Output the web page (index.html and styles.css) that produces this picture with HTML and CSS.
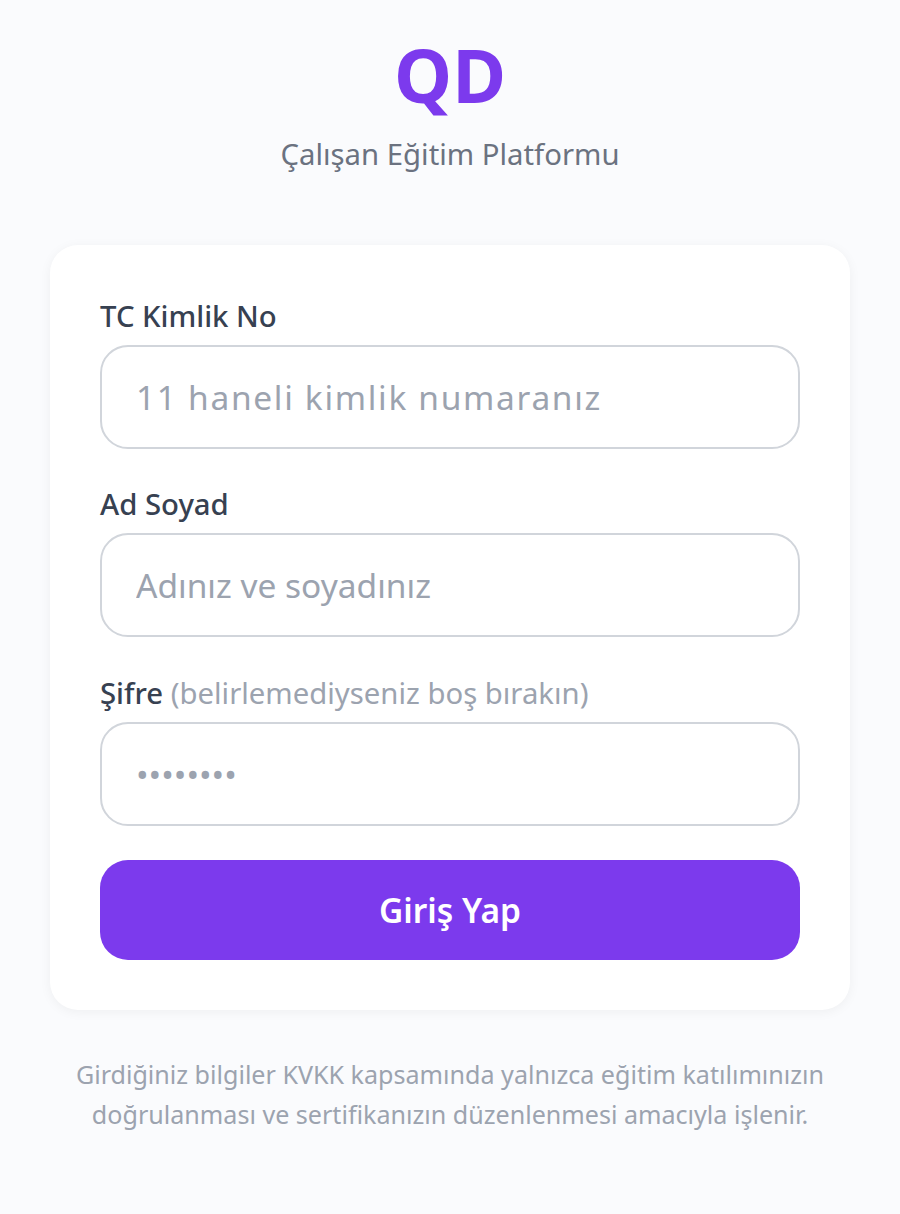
FILE: index.html
```html
<!DOCTYPE html>
<html lang="tr">
<head>
    <meta charset="UTF-8">
    <meta name="viewport" content="width=device-width, initial-scale=1.0">
    <title>QD - Giriş</title>
    <link rel="stylesheet" href="styles.css">
</head>
<body>
    <main class="page">
        <header class="brand">
            <h1 class="logo">QD</h1>
            <p class="tagline">Çalışan Eğitim Platformu</p>
        </header>
        <form class="card">
            <label class="label" for="tc">TC Kimlik No</label>
            <input class="input input-spaced" id="tc" type="text" placeholder="11 haneli kimlik numaranız">

            <label class="label" for="name">Ad Soyad</label>
            <input class="input" id="name" type="text" placeholder="Adınız ve soyadınız">

            <label class="label" for="pass">Şifre <span class="hint">(belirlemediyseniz boş bırakın)</span></label>
            <input class="input" id="pass" type="password" placeholder="••••••••">

            <button class="submit" type="button">Giriş Yap</button>
        </form>
        <p class="note">Girdiğiniz bilgiler KVKK kapsamında yalnızca eğitim katılımınızın doğrulanması ve sertifikanızın düzenlenmesi amacıyla işlenir.</p>
    </main>
</body>
</html>
```

FILE: styles.css
```css
* {
    box-sizing: border-box;
}
body {
    margin: 0;
    background-color: #fafbfd;
    font-family: "Noto Sans", sans-serif;
}
.page {
    padding: 35px 50px 0;
}
.brand {
    text-align: center;
    margin-bottom: 71px;
}
.logo {
    margin: 0;
    font-size: 73.5px;
    line-height: 80px;
    font-weight: 700;
    color: #7c3aed;
}
.tagline {
    margin: 19px 0 0;
    font-size: 29.3px;
    line-height: 40px;
    color: #6b7280;
}
.card {
    display: flex;
    flex-direction: column;
    background: white;
    padding: 50px;
    border-radius: 28px;
    box-shadow: 0 2px 12px rgba(0, 0, 0, 0.05);
}
.label {
    font-size: 29.3px;
    line-height: 42px;
    font-weight: 500;
    color: #374151;
    margin-bottom: 8px;
}
.hint {
    font-weight: 400;
    color: #9ca3af;
}
.input {
    height: 104px;
    padding: 0 34px;
    margin-bottom: 34.4px;
    border: 2px solid #d1d5db;
    border-radius: 28px;
    font-family: inherit;
    font-size: 33.5px;
    background: white;
}
.input::placeholder {
    color: #9ca3af;
}
.input-spaced::placeholder {
    letter-spacing: 0.05em;
}
.submit {
    height: 100px;
    border: none;
    border-radius: 28px;
    background-color: #7c3aed;
    color: white;
    font-family: inherit;
    font-size: 33.5px;
    font-weight: 600;
}
.note {
    margin: 44px 0 0;
    text-align: center;
    font-size: 25.1px;
    line-height: 40px;
    color: #9ca3af;
}
```
